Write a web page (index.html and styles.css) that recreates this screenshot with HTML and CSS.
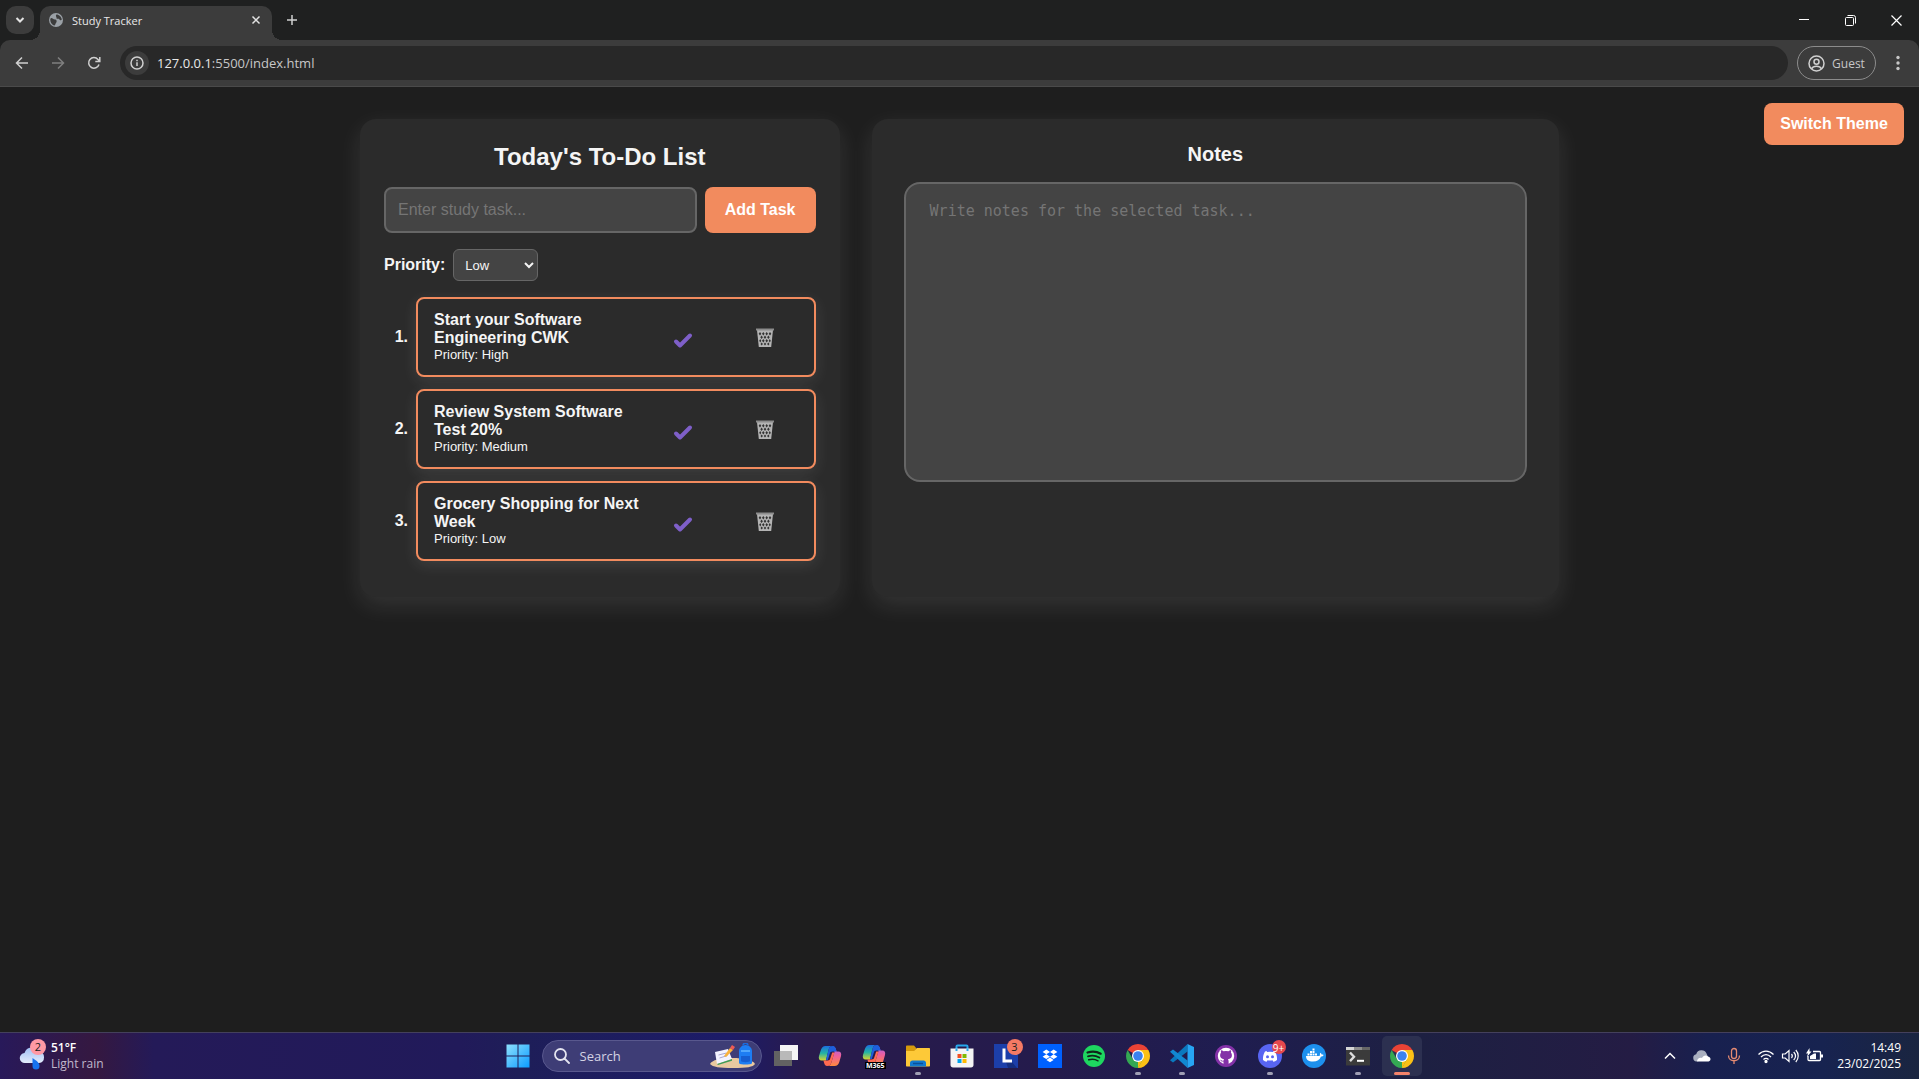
FILE: index.html
```html
<!DOCTYPE html>
<html lang="en">
<head>
<meta charset="utf-8">
<title>Study Tracker</title>
<link rel="stylesheet" href="styles.css">
</head>
<body>
<svg class="sprite" aria-hidden="true">
  <symbol id="check" viewBox="0 0 20 20"><path d="M3 11.500 7 15.500 17 5.500" fill="none" stroke="#7e5fc8" stroke-width="4" stroke-linecap="round" stroke-linejoin="round"/></symbol>
  <symbol id="trash" viewBox="0 0 20 20">
    <path d="M2 2h16l-1.800 17H3.800z" fill="#b4b4b4"/>
    <path d="M1 1.500h18" stroke="#8d8d8d" stroke-width="2"/>
    <g fill="#333"><path d="m5 4 1.300 1.800L5 7.600 3.700 5.800zM8.300 4l1.300 1.800-1.300 1.800L7 5.800zM11.700 4 13 5.800l-1.300 1.800-1.300-1.800zM15 4l1.300 1.800L15 7.600l-1.300-1.800zM6.600 7.500l1.300 1.800-1.300 1.800-1.300-1.800zM10 7.500l1.300 1.800-1.300 1.800-1.300-1.800zM13.400 7.500l1.300 1.800-1.300 1.800-1.300-1.800zM5.200 11l1.100 1.700-1 1.700-1.100-1.700zM8.300 11l1.300 1.700-1.300 1.700L7 12.700zM11.700 11l1.300 1.700-1.300 1.700-1.300-1.700zM14.800 11l1 1.700-1 1.700-1.100-1.700zM6.700 14.500l1.200 1.500-1.200 1.400L5.500 16zM10 14.500l1.200 1.500-1.200 1.400L8.800 16zM13.300 14.500l1.200 1.500-1.200 1.400-1.200-1.400z"/></g>
  </symbol>
  <symbol id="chrome" viewBox="0 0 24 24">
    <path d="M12 12 1.610 6A12 12 0 0 1 22.390 6z" fill="#ea4335"/>
    <path d="M12 12V6h10.390A12 12 0 0 1 12 24z" fill="#fbc116"/>
    <path d="M12 24A12 12 0 0 1 1.610 6L6.800 15l10.400 0z" fill="#34a853"/>
    <path d="M12 24 17.200 15 12 12z" fill="#fbc116"/>
    <circle cx="12" cy="12" r="6" fill="#fff"/><circle cx="12" cy="12" r="4.800" fill="#3b82f0"/>
  </symbol>
  <linearGradient id="cop1" x1="0" y1="0" x2="0" y2="1"><stop offset="0" stop-color="#1c6fe0"/><stop offset=".5" stop-color="#22b3a5"/><stop offset="1" stop-color="#d8d530"/></linearGradient>
  <linearGradient id="cop2" x1="0" y1="0" x2="0" y2="1"><stop offset="0" stop-color="#a162f0"/><stop offset=".5" stop-color="#f0609a"/><stop offset="1" stop-color="#ff8a3c"/></linearGradient>
  <symbol id="copilot" viewBox="0 0 24 24">
    <path d="M15 2.500c1.500 0 2.200 1 2.700 2.500l.9 2.500h1.600c2.600 0 3.500 1.900 2.800 4.500l-1.700 6c-.8 2.500-2.300 4-4.800 4H9c3 0 3.700-1.500 4.500-4l3-10z" fill="url(#cop2)"/>
    <path d="M8 16.500H3.800C1.200 16.500.3 14.600 1 12l1.700-5.500C3.500 4 5 2 7.500 2H15c-3 0-3.700 1.500-4.500 4l-2.500 10z" fill="url(#cop1)"/>
    <path d="M5.400 16.500h4.400c1.500 0 2-.7 2.600-2.500l1.800-5.500h2.300l-3 9.500c-.8 2.500-1.500 4-4.500 4-1.500 0-2.200-1-2.700-2.500z" fill="#ff6a50"/>
    <path d="M18.600 7.500h-4.200c-1.500 0-2.200.7-2.700 2.500l-1.900 6H8l2.500-10C11.300 3.500 12 2 15 2c1.500 0 2.200 1 2.700 2.500z" fill="#1d5fdc"/>
  </symbol>
</svg>

<header class="browser">
  <div class="tabstrip">
    <button class="tab-search" aria-label="Search tabs"><svg width="12" height="12" viewBox="0 0 12 12"><path d="m2.500 4 3.500 3.500L9.500 4" class="line thick"/></svg></button>
    <div class="tab">
      <svg width="14" height="14" viewBox="0 0 14 14"><circle cx="7" cy="7" r="7" fill="#9aa0a6"/><path d="M2 5c2 0 2 1.500 4 1.500S8 9 7 10s-.5 2-1.500 2.500C3 12 1 9 1.300 6zM7.500 1.500C6 3 8 4 7.500 5.500 9 6 10 5 10.500 6.500s2 .5 2.300 0C12.500 4 10 1.500 7.500 1.500z" fill="#3c3c3c"/></svg>
      <span class="tab-title">Study Tracker</span>
      <button class="plain" aria-label="Close tab"><svg width="10" height="10" viewBox="0 0 10 10"><path d="m1.500 1.500 7 7m0-7-7 7" class="line bright"/></svg></button>
    </div>
    <button class="plain new-tab" aria-label="New tab"><svg width="12" height="12" viewBox="0 0 12 12"><path d="M6 1v10M1 6h10" class="line"/></svg></button>
    <div class="window-controls">
      <button aria-label="Minimize"><svg width="10" height="10" viewBox="0 0 10 10"><path d="M0 4.500h10" stroke="#fff"/></svg></button>
      <button aria-label="Restore"><svg width="11" height="11" viewBox="0 0 11 11" fill="none" stroke="#fff"><rect x=".5" y="2.500" width="8" height="8" rx="1"/><path d="M2.500.5h6a2 2 0 0 1 2 2v6"/></svg></button>
      <button aria-label="Close"><svg width="11" height="11" viewBox="0 0 11 11"><path d="m.5.5 10 10m0-10-10 10" stroke="#fff" stroke-width="1.200"/></svg></button>
    </div>
  </div>
  <div class="toolbar">
    <button class="plain nav" aria-label="Back"><svg width="14" height="14" viewBox="0 0 14 14"><path d="M13 7H2m5-5.500L1.500 7 7 12.500" class="line"/></svg></button>
    <button class="plain nav off" aria-label="Forward"><svg width="14" height="14" viewBox="0 0 14 14"><path d="M1 7h11M7 1.500 12.500 7 7 12.500" class="line"/></svg></button>
    <button class="plain nav" aria-label="Reload"><svg width="14" height="14" viewBox="0 0 14 14"><path d="M12 8.500A5.300 5.300 0 1 1 11 3.400l1.500 1.800M12.800 1v4.500H8.300" class="line"/></svg></button>
    <div class="omnibox">
      <span class="site-info"><svg width="14" height="14" viewBox="0 0 14 14"><circle cx="7" cy="7" r="6" class="line"/><path d="M7 6.200V10M7 3.800v1.400" class="line"/></svg></span>
      <span class="url">127.0.0.1<span>:5500/index.html</span></span>
    </div>
    <button class="guest"><svg width="17" height="17" viewBox="0 0 17 17"><g class="line"><circle cx="8.500" cy="8.500" r="7.500"/><circle cx="8.500" cy="6.800" r="2.500"/><path d="M3.500 13.800c2-3.300 8-3.300 10 0"/></g></svg>Guest</button>
    <button class="plain kebab" aria-label="Menu"><svg width="4" height="16" viewBox="0 0 4 16" fill="#c7c7c7"><circle cx="2" cy="2.500" r="1.700"/><circle cx="2" cy="8" r="1.700"/><circle cx="2" cy="13.500" r="1.700"/></svg></button>
  </div>
</header>

<div class="page">
  <button class="primary theme">Switch Theme</button>
  <main class="board">
    <section class="card todo">
      <h2>Today's To-Do List</h2>
      <div class="add-row">
        <input type="text" placeholder="Enter study task..." aria-label="Study task">
        <button class="primary">Add Task</button>
      </div>
      <div class="priority-row">
        <label for="priority">Priority:</label>
        <select id="priority"><option>Low</option><option>Medium</option><option>High</option></select>
      </div>
      <ol class="tasks">
        <li><span class="number">1.</span>
          <div class="task"><div><strong>Start your Software Engineering CWK</strong><small>Priority: High</small></div>
            <button class="plain done" aria-label="Mark done"><svg width="20" height="20"><use href="#check"/></svg></button>
            <button class="plain delete" aria-label="Delete"><svg width="20" height="20"><use href="#trash"/></svg></button></div></li>
        <li><span class="number">2.</span>
          <div class="task"><div><strong>Review System Software Test 20%</strong><small>Priority: Medium</small></div>
            <button class="plain done" aria-label="Mark done"><svg width="20" height="20"><use href="#check"/></svg></button>
            <button class="plain delete" aria-label="Delete"><svg width="20" height="20"><use href="#trash"/></svg></button></div></li>
        <li><span class="number">3.</span>
          <div class="task"><div><strong>Grocery Shopping for Next Week</strong><small>Priority: Low</small></div>
            <button class="plain done" aria-label="Mark done"><svg width="20" height="20"><use href="#check"/></svg></button>
            <button class="plain delete" aria-label="Delete"><svg width="20" height="20"><use href="#trash"/></svg></button></div></li>
      </ol>
    </section>
    <section class="card notes">
      <h3>Notes</h3>
      <textarea placeholder="Write notes for the selected task..." aria-label="Notes"></textarea>
    </section>
  </main>
</div>

<footer class="taskbar">
  <div class="weather">
    <div class="weather-icon">
      <svg width="26" height="28" viewBox="0 0 26 28"><defs><linearGradient id="cl" x1="0" y1="0" x2="0" y2="1"><stop offset="0" stop-color="#9fc0f5"/><stop offset="1" stop-color="#e3ecfb"/></linearGradient></defs><path d="M6 21a5 5 0 0 1-.5-10A8 8 0 0 1 20 9.500 5.800 5.800 0 0 1 20 21z" fill="url(#cl)"/><path d="M13.500 16c4 2.500 7 5 7 8a3.500 3.500 0 0 1-7 0z" fill="#1673f0"/></svg>
      <span class="badge pink">2</span>
    </div>
    <div class="stack"><b>51°F</b><span class="dim">Light rain</span></div>
  </div>
  <nav class="apps">
    <button aria-label="Start"><svg width="24" height="24" viewBox="0 0 24 24"><defs><linearGradient id="win" x1="0" y1="0" x2="1" y2="1"><stop offset="0" stop-color="#8ee0fd"/><stop offset="1" stop-color="#0b9bff"/></linearGradient></defs><path d="M.5.500h11v11H.5zM12.500.500h11v11h-11zM.5 12.500h11v11H.5zM12.500 12.500h11v11h-11z" fill="url(#win)"/></svg></button>
    <button class="search"><svg width="16" height="16" viewBox="0 0 16 16"><g fill="none" stroke="#e4e4f0" stroke-width="1.800"><circle cx="6.500" cy="6.500" r="5.500"/><path d="m10.500 10.500 4.500 4.500" stroke-linecap="round"/></g></svg><span>Search</span>
      <svg class="doodle" width="46" height="26" viewBox="0 0 46 26"><path d="M0 21c2-4 10-6 22-6s21 2 23 6c-2 3-8 4-22 4S3 24 0 21z" fill="#e9c9a0"/><path d="M5 9 18 6l4 10-15 5z" fill="#f4f3ff"/><path d="m7 21 15-5v1.800L8 22z" fill="#3f9b58"/><path d="m8.500 12 8-2m-7 5 8-2.500" stroke="#a9a6cf"/><path d="m14 13 6-8 3 2-7 7z" fill="#f9b23c"/><path d="m20 5 2-3 3 2-2 3z" fill="#ec5b55"/><path d="M29 8c0-3 3-6 6.500-6S42 5 42 8v12c0 2-13 2-13 0z" fill="#1d7df3"/><path d="M33 2.500c0-3 5-3 5 0" fill="none" stroke="#1a6be0" stroke-width="1.500"/><path d="M31 13h9v5c0 1.500-9 1.500-9 0z" fill="#155ed2"/><path d="M31 8h9" stroke="#60b5ff" stroke-width="1.500"/></svg></button>
    <button aria-label="Task view"><svg width="24" height="24" viewBox="0 0 24 24"><path d="M0 7h18v15H0z" fill="#626262"/><path d="M6 1h18v15H6z" fill="#f5f5f5"/><path d="M6 7h12v9H6z" fill="#b9b9b9"/></svg></button>
    <button aria-label="Copilot"><svg width="24" height="24"><use href="#copilot"/></svg></button>
    <button aria-label="Microsoft 365"><svg width="24" height="24" viewBox="0 0 24 24"><use href="#copilot" y="-1" width="24" height="24"/></svg><span class="m365">M365</span></button>
    <button class="open" aria-label="File Explorer"><svg width="24" height="24" viewBox="0 0 24 24"><path d="M0 2.500C0 1.700.5 1.500 1 1.500h7l2.500 3L8 8H0z" fill="#d69a0c"/><path d="M0 7h8l3-3h12c.6 0 1 .4 1 1v16.500c0 .6-.4 1-1 1H1c-.6 0-1-.4-1-1z" fill="#fdc938"/><path d="M4 22.500V19c0-1.500 1-2.500 2.500-2.500h11c1.500 0 2.500 1 2.500 2.500v3.500z" fill="#1279cf"/><path d="M7 19.500h10" stroke="#0a4f98" stroke-width="1.500"/></svg></button>
    <button aria-label="Microsoft Store"><svg width="24" height="24" viewBox="0 0 24 24"><path d="M6.500 7V2.500c0-.6.400-1 1-1h9c.6 0 1 .4 1 1V7" fill="none" stroke="#27a9ee" stroke-width="2"/><path d="M.5 4.500h23V21c0 1.500-1 2.500-2.500 2.500H3C1.500 23.500.5 22.500.5 21z" fill="#f4f4f4"/><path d="M6.500 7V4.500M17.500 7V4.500" stroke="#27a9ee" stroke-width="2"/><path d="M7.500 10h4v4h-4z" fill="#f25022"/><path d="M12.500 10h4v4h-4z" fill="#7fba00"/><path d="M7.500 15h4v4h-4z" fill="#00a4ef"/><path d="M12.500 15h4v4h-4z" fill="#ffb900"/></svg></button>
    <button aria-label="L"><svg width="24" height="24" viewBox="0 0 24 24"><path d="M0 0h24v24H0z" fill="#1c3faa"/><path d="m12 18 6 0 5 6H14z" fill="#142e80"/><path d="M10 4.500V17h8" fill="none" stroke="#fff" stroke-width="3"/></svg><span class="badge coral">3</span></button>
    <button aria-label="Dropbox"><svg width="24" height="24" viewBox="0 0 24 24"><path d="M0 0h24v24H0z" fill="#0061fe"/><path d="m8.300 5.500 3.700 2.400-3.700 2.400-3.700-2.400zM15.700 5.500l3.700 2.400-3.700 2.400L12 7.900zM8.300 10.300l3.700 2.400-3.700 2.400-3.700-2.400zM15.700 10.300l3.700 2.400-3.700 2.400-3.700-2.400zM12 13.600l3.600 2.300L12 18.300l-3.600-2.400z" fill="#fff"/></svg></button>
    <button aria-label="Spotify"><svg width="24" height="24" viewBox="0 0 24 24"><circle cx="12" cy="12" r="11" fill="#1ed760"/><g fill="none" stroke="#10251a" stroke-linecap="round"><path d="M5.500 8.500c4-1.300 9.500-1 13.200 1.200" stroke-width="2.200"/><path d="M6 12.300c3.700-1.100 8-.7 11.300 1.200" stroke-width="1.900"/><path d="M6.700 15.800c3.300-.9 6.500-.6 9.300 1" stroke-width="1.500"/></g></svg></button>
    <button class="open" aria-label="Chrome"><svg width="24" height="24"><use href="#chrome"/></svg></button>
    <button class="open" aria-label="Visual Studio Code"><svg width="24" height="24" viewBox="0 0 24 24"><path d="M17.500 0v7.500L3 18.500l-3-2.200z" fill="#0a78be"/><path d="M17.500 24v-7.500L3 5.500 0 7.800z" fill="#1188d1"/><path d="M17.500 0 24 3v18l-6.500 3z" fill="#27a5f3"/></svg></button>
    <button aria-label="GitHub"><svg width="24" height="24" viewBox="0 0 24 24"><circle cx="12" cy="12" r="11" fill="#8432a8"/><circle cx="12" cy="12" r="8.200" fill="#fff"/><path d="M9.500 21v-3.500c-2.500.6-2.600-1.500-3.600-1.800 1.600-.3 1.600 1.400 3.600 1 0-.6.300-1.100.6-1.400-2.600-.3-4-1.500-4-4 0-1.100.3-1.900.9-2.500-.3-1-.2-1.800.1-2.500.9 0 1.700.5 2.400 1a9 9 0 0 1 5 0c.7-.5 1.500-1 2.400-1 .3.700.4 1.500.1 2.500.6.600.9 1.400.9 2.500 0 2.500-1.400 3.700-4 4 .4.400.7 1 .7 1.900V21z" fill="#8432a8"/></svg></button>
    <button class="open" aria-label="Discord"><svg width="24" height="24" viewBox="0 0 24 24"><circle cx="12" cy="12" r="12" fill="#5865f2"/><path d="M8.500 7 7 7.500C5.500 10 4.800 12.500 5 16c1.300 1 2.500 1.500 3.600 1.700l.9-1.500c1.600.4 3.400.4 5 0l.9 1.500c1.100-.2 2.300-.7 3.600-1.700.2-3.500-.5-6-2-8.500L15.500 7l-.6 1.100a13 13 0 0 0-5.800 0z" fill="#fff"/><circle cx="9.500" cy="12.700" r="1.500" fill="#5865f2"/><circle cx="14.500" cy="12.700" r="1.500" fill="#5865f2"/></svg><span class="badge red">9+</span></button>
    <button aria-label="Docker"><svg width="24" height="24" viewBox="0 0 24 24"><circle cx="12" cy="12" r="12" fill="#1d90ed"/><path d="M4 12h12.500c.8 0 1.300-.2 1.700-.5-.5-1-.4-2 .2-2.800.7.500 1.100 1.100 1.200 1.900.7-.1 1.400 0 2 .4-.5 1-1.400 1.500-2.600 1.500-1.300 3.300-3.700 5-8 5-4.500 0-7-1.700-7-5.500z" fill="#fff"/><path d="M5.500 9.500h2v2h-2zM8 9.500h2v2H8zM10.500 9.500h2v2h-2zM13 9.500h2v2h-2zM8 7h2v2H8zM10.500 7h2v2h-2zM10.500 4.500h2v2h-2z" fill="#fff"/></svg></button>
    <button class="open" aria-label="Terminal"><svg width="24" height="24" viewBox="0 0 24 24"><path d="M0 3h24v18.500H0z" fill="#3b3b3b"/><path d="M0 3h8v3H0z" fill="#d5d5d5"/><path d="M8 3h8v3H8z" fill="#8e8e8e"/><path d="M16 3h8v3h-8z" fill="#666"/><path d="m4 8.500 4 4.300-4 4.300" fill="none" stroke="#dcdcdc" stroke-width="2.400"/><path d="M11 16.800h7" stroke="#fff" stroke-width="2"/></svg></button>
    <button class="open active" aria-label="Chrome, current window"><svg width="24" height="24"><use href="#chrome"/></svg></button>
  </nav>
  <div class="tray">
    <svg width="20" height="20" viewBox="0 0 20 20"><path d="m5 12.500 5-5 5 5" fill="none" stroke="#fff" stroke-width="1.500"/></svg>
    <svg width="20" height="20" viewBox="0 0 20 20"><path d="M4.500 15.500a3.700 3.700 0 0 1-.3-7.300A5.500 5.500 0 0 1 14.500 7.500L17 13z" fill="#aab0c0"/><path d="M5 15.500c0-3 3-4.500 5-3.500 1-2.500 4-3.500 6-1.500 4 1 2.500 5 .5 5z" fill="#fff"/></svg>
    <svg width="20" height="20" viewBox="0 0 20 20" fill="none" stroke="#e58a72" stroke-width="1.300"><rect x="7.500" y="2.500" width="5" height="10" rx="2.500"/><path d="M4.500 9.500c0 7 11 7 11 0M10 14.800V18"/></svg>
    <div class="quick">
      <svg width="18" height="18" viewBox="0 0 18 18" fill="none" stroke="#fff" stroke-width="1.300"><path d="M1.500 7.500c4.500-4.600 10.500-4.600 15 0M4 10c3-3.100 7-3.100 10 0M6.500 12.500c1.500-1.600 3.500-1.600 5 0"/><circle cx="9" cy="14.500" r="1" fill="#fff"/></svg>
      <svg width="18" height="18" viewBox="0 0 18 18" fill="none" stroke="#fff" stroke-width="1.200"><path d="M1.500 7v4h2.700L8 14.500v-11L4.200 7zM10.500 7c1 1.200 1 2.800 0 4M12.700 5c2.200 2.400 2.200 5.600 0 8M14.800 3c3.200 3.500 3.200 8.500 0 12"/></svg>
      <svg width="18" height="18" viewBox="0 0 18 18"><path d="M8 4.500h6.500a1 1 0 0 1 1 1v7a1 1 0 0 1-1 1H4a1 1 0 0 1-1-1V9" fill="none" stroke="#fff" stroke-width="1.300"/><path d="M17 7.500v3" stroke="#fff" stroke-width="2"/><path d="M5 12V9l4-2.500h2V12zM4.500 1 1 6.500h2L2 10l4.500-5.500h-2z" fill="#fff"/></svg>
    </div>
    <div class="stack clock"><span>14:49</span><span>23/02/2025</span></div>
  </div>
</footer>
</body>
</html>
```
FILE: styles.css
```css
* { box-sizing: border-box; }

body {
  margin: 0;
  min-height: 100vh;
  display: flex;
  flex-direction: column;
  background: #1e1e1e;
  color: #f5f5f5;
  font-family: "Liberation Sans", Arial, sans-serif;
  font-size: 16px;
}

button { font: inherit; color: inherit; border: 0; background: none; padding: 0; cursor: pointer; }
svg { display: block; flex: none; }
.sprite { position: absolute; width: 0; height: 0; }
.plain, .tab-search, .window-controls button { display: grid; place-items: center; }
.line { fill: none; stroke: #d0d0d0; stroke-width: 1.5; }
.bright { stroke: #e3e3e3; }
.thick { stroke-width: 2; stroke: #e3e3e3; }

/* Browser frame */
.browser { background: #1f2020; font-family: "Open Sans", "Noto Sans", sans-serif; font-size: 12px; }
.tabstrip { display: flex; align-items: center; height: 40px; padding-left: 6px; }
.tab-search { width: 28px; height: 28px; border-radius: 10px; background: #3c3c3c; margin-right: 6px; }
.tab {
  position: relative;
  align-self: flex-end;
  display: flex;
  align-items: center;
  gap: 9px;
  width: 232px;
  height: 34px;
  padding: 0 11px 6px 9px;
  border-radius: 10px 10px 0 0;
  background: #3c3c3c;
}
.tab::before, .tab::after { content: ""; position: absolute; bottom: 0; width: 10px; height: 10px; }
.tab::before { right: 100%; background: radial-gradient(circle at 0 0, transparent 10px, #3c3c3c 10px); }
.tab::after { left: 100%; background: radial-gradient(circle at 100% 0, transparent 10px, #3c3c3c 10px); }
.tab-title { flex: 1; font-size: 11px; color: #e8e8e8; }
.new-tab { margin-left: 14px; }
.window-controls { display: flex; margin-left: auto; }
.window-controls button { width: 46px; height: 40px; }

.toolbar {
  display: flex;
  align-items: center;
  height: 47px;
  padding: 0 11px 0 8px;
  border-radius: 10px 10px 0 0;
  border-bottom: 1px solid #4a4a4a;
  background: #3c3c3c;
}
.nav { width: 28px; height: 28px; margin-right: 8px; }
.off { opacity: .45; }
.omnibox { flex: 1; display: flex; align-items: center; gap: 8px; height: 34px; padding-left: 5px; margin-left: 4px; border-radius: 17px; background: #282828; }
.site-info { display: grid; place-items: center; width: 24px; height: 24px; border-radius: 50%; background: #3c3c3c; }
.url { font-size: 13px; color: #e8e8e8; }
.url span { color: #c7c7c7; }
.guest { display: flex; align-items: center; justify-content: center; gap: 7px; width: 79px; height: 34px; margin: 0 12px 0 9px; border: 1px solid #8c8c8c; border-radius: 17px; color: #c7c7c7; }
.kebab { width: 20px; height: 28px; }

/* Study tracker */
.page { position: relative; flex: 1; padding: 32px 16px; }
.board { display: grid; grid-template-columns: 40% 1fr; gap: 32px; max-width: 1199px; margin: 0 auto; }
.primary { border-radius: 8px; background: #f28b5e; color: #fff; font-weight: 700; }
.theme { position: absolute; top: 16px; right: 15px; width: 140px; height: 42px; }
.card { padding: 24px; border-radius: 16px; background: #2b2b2b; box-shadow: 0 8px 24px rgba(255, 255, 255, .1); }
.card h2, .card h3 { margin: 0 0 16px; text-align: center; }
.card h2 { font-size: 24px; line-height: 28px; }
.card h3 { font-size: 20px; line-height: 23px; }
.add-row { display: flex; gap: 8px; margin-bottom: 16px; }
.add-row input { flex: 1; min-width: 0; height: 46px; padding: 0 12px; border: 2px solid #666; border-radius: 8px; background: #444; color: #f5f5f5; font: inherit; }
.add-row button { width: 111px; }
input::placeholder, textarea::placeholder { color: #757575; }
.priority-row { display: flex; align-items: center; gap: 8px; margin-bottom: 16px; font-weight: 700; }
.priority-row select { width: 85px; height: 32px; padding: 0 7px; border: 1px solid #666; border-radius: 6px; background: #444; color: #f5f5f5; font: 13px "Liberation Sans", Arial, sans-serif; }

.tasks { list-style: none; margin: 0; padding: 0; }
.tasks li { display: grid; grid-template-columns: 32px 1fr; align-items: center; margin-bottom: 12px; }
.number { padding-right: 8px; text-align: right; font-weight: 700; }
.task {
  display: grid;
  grid-template-columns: 1fr 82px 82px;
  align-items: center;
  min-height: 80px;
  padding: 0 8px 0 16px;
  border: 2px solid #f28b5e;
  border-radius: 8px;
  background: #2b2b2b;
  box-shadow: 0 4px 16px rgba(255, 255, 255, .1);
}
.task strong, .task small { display: block; }
.task strong { line-height: 18px; }
.task small { font-size: 13px; line-height: 16px; }
.done { padding-top: 6px; }
.delete { padding-top: 2px; }

.notes { padding: 24px 32px; }
.notes textarea { display: block; width: 100%; height: 300px; padding: 16px 24px; border: 2px solid #666; border-radius: 16px; background: #444; color: #f5f5f5; font: 15px/22px "DejaVu Sans Mono", monospace; resize: none; }

/* Windows taskbar */
.taskbar {
  display: grid;
  grid-template-columns: 1fr auto 1fr;
  align-items: center;
  height: 47px;
  border-top: 1px solid #44405c;
  background: linear-gradient(90deg, #28195a 0, #351840 5%, #241a58 8%, #211a5a 24%, #1e1e58 27%, #1c1b68 38%, #291b4c 42%, #241b4c 55%, #1f1d50 64%, #1d2042 74%, #241c44 85%, #18204f 89%, #172350 95%, #1a2540 100%);
  color: #fff;
  font: 12px/16px "Open Sans", "Noto Sans", sans-serif;
}
.weather { display: flex; align-items: center; gap: 6px; padding-left: 19px; }
.weather-icon { position: relative; }
.stack { display: flex; flex-direction: column; }
.stack b { font-weight: 600; }
.dim { color: #c0b8cc; }
.badge { position: absolute; display: grid; place-items: center; width: 16px; height: 16px; border-radius: 50%; font-size: 11px; line-height: 16px; color: #202020; }
.pink { top: -3px; right: -1px; background: #ff99a4; }
.coral { top: 3px; right: 3px; background: #f57a64; }
.red { top: 4px; right: 4px; width: 14px; height: 14px; background: #e5484d; color: #fff; font-size: 10px; }
.apps { display: flex; gap: 4px; }
.apps button { position: relative; display: grid; place-items: center; width: 40px; height: 40px; border-radius: 5px; }
.apps .search { align-self: center; display: flex; align-items: center; gap: 10px; width: 220px; height: 32px; padding: 0 5px 0 11px; border-radius: 16px; border: 1px solid #59588e; background: #3e3d76; color: #d5d3e4; font-size: 13px; }
.doodle { margin-left: auto; }
.open::after { content: ""; position: absolute; bottom: 1px; width: 6px; height: 3px; border-radius: 2px; background: #a09fb4; }
.apps .active { background: #2c3050; }
.active::after { width: 16px; background: #f4836b; }
.m365 { position: absolute; right: 8px; bottom: 7px; padding: 0 1px; background: #000; font-size: 7px; line-height: 7px; font-weight: 700; }
.tray { display: flex; justify-content: flex-end; align-items: center; gap: 12px; padding-right: 18px; }
.quick { display: flex; gap: 6px; margin-left: 1px; }
.clock { text-align: right; margin-left: 2px; }

@media (max-width: 1000px) {
  .board { grid-template-columns: 1fr; }
}
```
